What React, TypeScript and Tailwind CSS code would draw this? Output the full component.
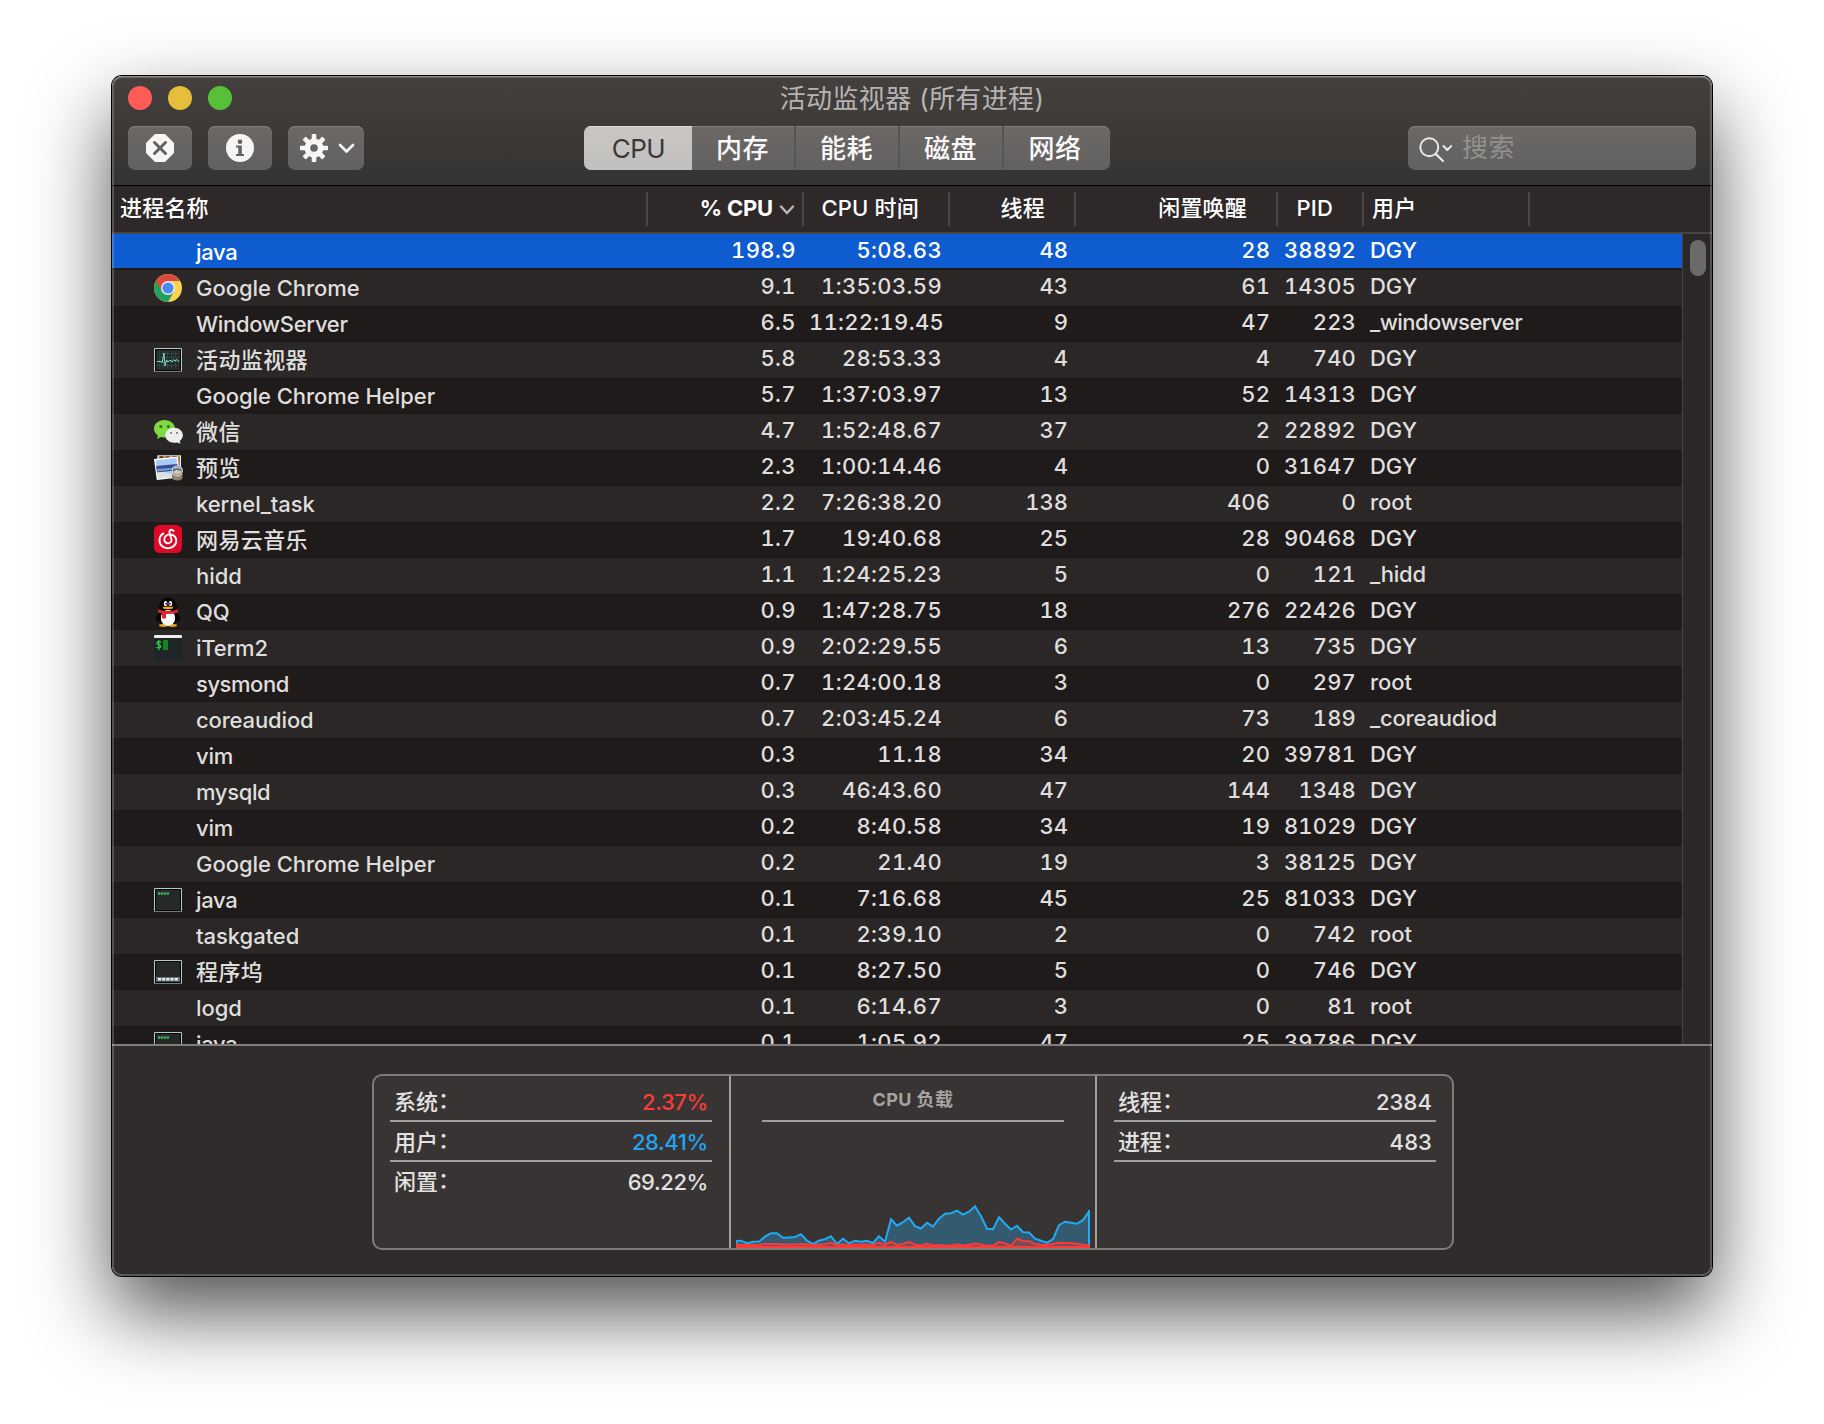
import React from "react";

type IconName = "chrome" | "activity" | "wechat" | "preview" | "netease" | "qq" | "iterm" | "exec" | "dock";

interface Process {
  name: string;
  cpu: string;
  time: string;
  threads: string;
  idle: string;
  pid: string;
  user: string;
  icon?: IconName;
}

const p = (
  name: string,
  cpu: string,
  time: string,
  threads: string,
  idle: string,
  pid: string,
  user: string,
  icon?: IconName,
): Process => ({ name, cpu, time, threads, idle, pid, user, icon });

const processes: Process[] = [
  p("java", "198.9", "5:08.63", "48", "28", "38892", "DGY"),
  p("Google Chrome", "9.1", "1:35:03.59", "43", "61", "14305", "DGY", "chrome"),
  p("WindowServer", "6.5", "11:22:19.45", "9", "47", "223", "_windowserver"),
  p("活动监视器", "5.8", "28:53.33", "4", "4", "740", "DGY", "activity"),
  p("Google Chrome Helper", "5.7", "1:37:03.97", "13", "52", "14313", "DGY"),
  p("微信", "4.7", "1:52:48.67", "37", "2", "22892", "DGY", "wechat"),
  p("预览", "2.3", "1:00:14.46", "4", "0", "31647", "DGY", "preview"),
  p("kernel_task", "2.2", "7:26:38.20", "138", "406", "0", "root"),
  p("网易云音乐", "1.7", "19:40.68", "25", "28", "90468", "DGY", "netease"),
  p("hidd", "1.1", "1:24:25.23", "5", "0", "121", "_hidd"),
  p("QQ", "0.9", "1:47:28.75", "18", "276", "22426", "DGY", "qq"),
  p("iTerm2", "0.9", "2:02:29.55", "6", "13", "735", "DGY", "iterm"),
  p("sysmond", "0.7", "1:24:00.18", "3", "0", "297", "root"),
  p("coreaudiod", "0.7", "2:03:45.24", "6", "73", "189", "_coreaudiod"),
  p("vim", "0.3", "11.18", "34", "20", "39781", "DGY"),
  p("mysqld", "0.3", "46:43.60", "47", "144", "1348", "DGY"),
  p("vim", "0.2", "8:40.58", "34", "19", "81029", "DGY"),
  p("Google Chrome Helper", "0.2", "21.40", "19", "3", "38125", "DGY"),
  p("java", "0.1", "7:16.68", "45", "25", "81033", "DGY", "exec"),
  p("taskgated", "0.1", "2:39.10", "2", "0", "742", "root"),
  p("程序坞", "0.1", "8:27.50", "5", "0", "746", "DGY", "dock"),
  p("logd", "0.1", "6:14.67", "3", "0", "81", "root"),
  p("java", "0.1", "1:05.92", "47", "25", "39786", "DGY", "exec"),
];

const TIGHT: Record<string, string> = {
  WindowServer: "tracking-[-0.3px]",
  sysmond: "tracking-[-0.45px]",
  mysqld: "tracking-[-0.35px]",
  java: "tracking-[-0.3px]",
  vim: "tracking-[-0.2px]",
  coreaudiod: "tracking-[-0.15px]",
  kernel_task: "tracking-[-0.1px]",
  iTerm2: "tracking-[-0.2px]",
  _windowserver: "tracking-[-0.55px]",
  _coreaudiod: "tracking-[-0.2px]",
  _hidd: "tracking-[-0.2px]",
};

function tracking(text: string) {
  if (/[\u4e00-\u9fff]/.test(text)) return "tracking-[0.4px]";
  return TIGHT[text] ?? "tracking-[-0.04px]";
}

const COLUMNS = "grid grid-cols-[536px_156px_146px_126px_202px_86px_166px_1fr]";

function Monitor({ children }: { children?: React.ReactNode }) {
  return (
    <>
      <rect x="0" y="6" width="28" height="24" rx="1" fill="#b9c6c9" />
      <rect x="0" y="29" width="28" height="1" fill="#777" />
      <rect x="1" y="7" width="26" height="22" fill="#080909" />
      <rect x="2" y="8" width="24" height="20" fill="#262928" />
      {children}
    </>
  );
}

function ProcessIcon({ name }: { name?: IconName }) {
  return (
    <svg width="30" height="36" viewBox="0 0 30 36" className="shrink-0">
      {name === "chrome" && (
        <g>
          <circle cx="14" cy="18" r="14" fill="#fdd04f" />
          <path d="M14 18 L1.9 11 A14 14 0 0 0 14 32 L20.1 21.5 Z" fill="#21a060" />
          <path d="M14 18 L7.9 21.5 L1.9 11 A14 14 0 0 1 26.1 11 H14 Z" fill="#dc4a3e" />
          <circle cx="14" cy="18" r="7" fill="#f4f1f0" />
          <circle cx="14" cy="18" r="5.6" fill="#4a8af4" />
        </g>
      )}
      {name === "activity" && (
        <Monitor>
          <path
            d="M3 11.5H25M3 15.5H25M3 19.5H25M3 23.5H25M5.5 9V27M9.5 9V27M13.5 9V27M17.5 9V27M21.5 9V27"
            stroke="#2e5850"
            strokeWidth="1"
            opacity="0.6"
          />
          <path
            d="M3 19.5H7L8 21L10 11L11 24L12.5 18L14 20L16 18L18 20L19.5 17.5L21 19L23 17.5L25 20"
            fill="none"
            stroke="#84d9c6"
            strokeWidth="1"
          />
        </Monitor>
      )}
      {name === "wechat" && (
        <g>
          <path
            d="M10.5 6C4.6 6 0 9.9 0 14.7c0 2.8 1.5 5.1 3.9 6.7L3.1 25l3.8-2.1c1.2.3 2.3.5 3.6.5 5.9 0 10.500-3.9 10.500-8.700S16.4 6 10.500 6Z"
            fill="#7fd943"
          />
          <circle cx="6.8" cy="12.4" r="1.5" fill="#2c6b1c" />
          <circle cx="14.4" cy="12.4" r="1.5" fill="#2c6b1c" />
          <path
            d="M20.2 13.8c-4.9 0-8.900 3.3-8.900 7.500s4 7.500 8.900 7.500c1 0 2-.1 2.900-.4l3.400 1.400-.8-2.900c2-1.400 3.200-3.400 3.200-5.600 0-4.200-3.900-7.500-8.700-7.500Z"
            fill="#eceeee"
          />
          <circle cx="17" cy="19" r="1.1" fill="#777" />
          <circle cx="23" cy="19" r="1.1" fill="#777" />
        </g>
      )}
      {name === "preview" && (
        <g>
          <path d="M3.3 5.3H27V26H3.3Z" fill="#f1efe9" />
          <path d="M4.5 6.3H26V24H4.5Z" fill="#a8733d" />
          <path d="M6 6.3h3v2H6zM12 6.3h3v2h-3zM19 6.3h4v2h-4z" fill="#5d3b1c" />
          <path d="M0 9L23.8 6.6L26 27.6L2.8 30Z" fill="#fff" />
          <path d="M1.5 10.2L22.6 8.1L24.5 26.4L4 28.5Z" fill="#a8cbf8" />
          <path d="M2.2 16L23.3 14L24 20L3 22.8Z" fill="#36508f" />
          <path d="M2.6 19L23.8 17.5L24 19L3 21.5Z" fill="#6f9fd8" />
          <path d="M3.1 22.6L10 21.8L16 24L24.2 23.5L24.5 26.4L4 28.5Z" fill="#dfe3df" />
          <path d="M18 24H28.500V27.5Q28 30.5 23.300 30.5T18 27.5Z" fill="#8f8469" />
          <circle cx="23.3" cy="20.8" r="5.6" fill="#d8dbdc" />
          <circle cx="23.3" cy="20.8" r="4.5" fill="#51617a" />
          <path d="M19.3 21.500l3.500-2 2 1.300 2.600-.6a4.200 4.200 0 0 1-8 2Z" fill="#d9c7ad" />
          <path d="M20.3 18.6Q23.3 16 26.3 18.8" stroke="#c6ddf2" strokeWidth="1.2" fill="none" />
        </g>
      )}
      {name === "netease" && (
        <g>
          <rect x="0" y="3" width="28" height="28" rx="5.5" fill="#dc0a26" />
          <path
            d="M9.4 11.400C4.6 14.200 4.400 20.800 7.900 24C11.800 27.500 18.800 26.700 21.400 22C23.700 17.400 21 12.400 16.200 12.400C12.400 12.400 10 14.700 10.300 17.700C10.500 20 12.300 21.300 14 21.300C16.500 21.300 17.900 19.300 17.400 17.100L15.500 10.400C15.100 8.500 16.200 7.700 17.400 7.700C18.400 7.700 19 8.200 19.600 9"
            fill="none"
            stroke="#fff"
            strokeWidth="1.9"
            strokeLinecap="round"
          />
        </g>
      )}
      {name === "qq" && (
        <g>
          <path d="M5 18Q1 24 2 27.5Q3.5 28 5.5 24ZM23 18Q27 24 26 27.5Q24.5 28 22.5 24Z" fill="#060606" />
          <ellipse cx="14" cy="22.5" rx="10" ry="10" fill="#060606" />
          <path d="M5 15C5 8 8.5 3.5 14 3.5S23 8 23 15V19H5Z" fill="#060606" />
          <ellipse cx="14" cy="24" rx="7" ry="8" fill="#fff" />
          <ellipse cx="9.5" cy="31.5" rx="4.5" ry="1.4" fill="#e9a01c" />
          <ellipse cx="18.5" cy="31.5" rx="4.5" ry="1.4" fill="#e9a01c" />
          <ellipse cx="14" cy="24.500" rx="6.800" ry="7.300" fill="#fff" />
          <ellipse cx="11.6" cy="9.5" rx="1.8" ry="2.5" fill="#fff" />
          <ellipse cx="16.4" cy="9.5" rx="1.8" ry="2.5" fill="#fff" />
          <circle cx="12.2" cy="9.7" r="0.9" fill="#111" />
          <circle cx="15.9" cy="9.7" r="0.9" fill="#111" />
          <ellipse cx="14" cy="13.8" rx="5.3" ry="1.4" fill="#f0a51e" />
          <path d="M4 15.5Q14 18.5 24 15.5L24 18.5Q14 21.5 4 18.5Z" fill="#e4232c" />
          <path d="M8 18.5h4v6H8z" fill="#e4232c" />
        </g>
      )}
      {name === "iterm" && (
        <g>
          <rect x="0" y="5" width="28" height="25" rx="1" fill="#1e2628" />
          <rect x="0" y="5" width="28" height="3" rx="1" fill="#f0f0f0" />
          <path
            d="M7 12.5C6.5 11.5 3 11.2 2.8 13S7 14.6 6.8 16.5S3 18 2.3 17M4.8 10V20"
            fill="none"
            stroke="#2fd44a"
            strokeWidth="1.2"
          />
          <rect x="9" y="10" width="5" height="10" fill="#148425" />
        </g>
      )}
      {name === "exec" && (
        <Monitor>
          <path d="M4 11.5H15" stroke="#3fae58" strokeWidth="2.4" strokeDasharray="2.3 0.6" />
        </Monitor>
      )}
      {name === "dock" && (
        <Monitor>
          <rect x="2" y="23" width="24" height="4.5" fill="#6c7378" />
          <path d="M4 25.2H25" stroke="#e4f0f8" strokeWidth="2.6" strokeDasharray="3 1.2" />
        </Monitor>
      )}
    </svg>
  );
}

function Separator() {
  return <span className="absolute right-0 top-[6px] h-[34px] w-[2px] bg-[#4a4645]" />;
}

function HeaderCell({ children, align = "right" }: { children?: React.ReactNode; align?: "left" | "right" }) {
  return (
    <div
      className={
        align === "left"
          ? "relative flex items-center pb-[2px] pl-[8px]"
          : "relative flex items-center justify-end pb-[2px] pr-[31px]"
      }
    >
      {children}
      <Separator />
    </div>
  );
}

function TableHeader() {
  return (
    <div className="h-[48px] shrink-0 border-b-2 border-[#484543] bg-[#2e2828] text-[22px] font-medium tracking-[0.2px] text-white">
      <div className={`${COLUMNS} h-full w-[1570px]`}>
        <HeaderCell align="left">进程名称</HeaderCell>
        <HeaderCell>
          <span className="whitespace-nowrap font-bold tracking-[-0.2px]">% CPU</span>
          <svg className="absolute right-[9px] top-[18px]" width="16" height="12" viewBox="0 0 16 12">
            <path d="M2 2.5L8 9L14 2.5" fill="none" stroke="#bbb8b7" strokeWidth="2.4" strokeLinecap="round" />
          </svg>
        </HeaderCell>
        <HeaderCell>
          <span className="whitespace-nowrap">CPU 时间</span>
        </HeaderCell>
        <HeaderCell>线程</HeaderCell>
        <HeaderCell>闲置唤醒</HeaderCell>
        <HeaderCell>PID</HeaderCell>
        <HeaderCell align="left">用户</HeaderCell>
      </div>
    </div>
  );
}

function Row({ process, index }: { process: Process; index: number }) {
  const selected = index === 0;
  const tone = selected
    ? "bg-[#0f5bd0] text-white border-b-2 border-[#1f1b1a]"
    : index % 2
      ? "bg-[#2a2726] text-[#dfdedd]"
      : "bg-[#1f1b1a] text-[#dfdedd]";
  const num = "whitespace-nowrap pr-[8px] text-right tabular-nums leading-[32px]";
  return (
    <div className={`${COLUMNS} h-[36px] shrink-0 text-[22px] font-medium ${tone}`}>
      <div className="flex h-[36px] items-start pl-[42px]">
        <ProcessIcon name={process.icon} />
        <span className={`whitespace-nowrap pl-[12px] leading-[36px] ${tracking(process.name)}`}>{process.name}</span>
      </div>
      <div className={`${num} tracking-[0.4px]`}>{process.cpu}</div>
      <div className={`${num} ${process.time.length > 10 ? "-mr-[2px] tracking-[0.3px]" : "tracking-[0.34px]"}`}>
        {process.time}
      </div>
      <div className={num}>{process.threads}</div>
      <div className={`${num} tracking-[0.1px]`}>{process.idle}</div>
      <div className={`${num} tracking-[0.15px]`}>{process.pid}</div>
      <div className={`whitespace-nowrap pl-[6px] leading-[32px] ${tracking(process.user)}`}>{process.user}</div>
    </div>
  );
}

function ToolButton({ children, wide }: { children: React.ReactNode; wide?: boolean }) {
  return (
    <div
      className={`flex h-[44px] items-center justify-center rounded-[7px] bg-gradient-to-b from-[#6b6866] to-[#636160] shadow-[inset_0_1px_0_#858180] ${
        wide ? "w-[76px] pl-[4px]" : "w-[64px]"
      }`}
    >
      {children}
    </div>
  );
}

function Titlebar() {
  const tabs = ["内存", "能耗", "磁盘", "网络"];
  return (
    <div className="flex h-[110px] shrink-0 flex-col border-b border-black bg-gradient-to-b from-[#44403e] to-[#353331]">
      <div className="grid h-[44px] grid-cols-[1fr_auto_1fr] items-center px-[16px]">
        <div className="flex gap-[16px]">
          <span className="size-[24px] rounded-full bg-[#ff5b57]" />
          <span className="size-[24px] rounded-full bg-[#e5bf3c]" />
          <span className="size-[24px] rounded-full bg-[#57c038]" />
        </div>
        <div className="h-[44px] whitespace-nowrap text-[26px] leading-[46px] tracking-[0.35px] text-[#b6b4b2]">
          活动监视器 (所有进程)
        </div>
        <div />
      </div>
      <div className="mt-[6px] flex h-[44px] px-[16px]">
        <div className="flex w-[456px] gap-[16px]">
          <ToolButton>
            <svg width="28" height="28" viewBox="0 0 28 28">
              <path d="M9 0H19L28 9V19L19 28H9L0 19V9Z" fill="#f8f6f5" />
              <path d="M8.5 8.5L19.5 19.5M19.5 8.5L8.5 19.5" stroke="#646160" strokeWidth="3" strokeLinecap="round" />
            </svg>
          </ToolButton>
          <ToolButton>
            <svg width="28" height="28" viewBox="0 0 28 28">
              <circle cx="14" cy="14" r="14" fill="#f8f6f5" />
              <circle cx="14" cy="7.8" r="2.3" fill="#646160" />
              <path d="M10 11.5H15.8V20H18V22H10V20H12.3V13.5H10Z" fill="#646160" />
            </svg>
          </ToolButton>
          <ToolButton wide>
            <svg width="56" height="28" viewBox="0 0 56 28">
              <g fill="#f8f6f5">
                {[0, 45, 90, 135].map((angle) => (
                  <rect key={angle} x="11.7" y="0" width="4.6" height="28" rx="0.8" transform={`rotate(${angle} 14 14)`} />
                ))}
                <circle cx="14" cy="14" r="9.5" />
              </g>
              <circle cx="14" cy="14" r="3.8" fill="#676462" />
              <path d="M40 11L46.500 17.500L53 11" fill="none" stroke="#f8f6f5" strokeWidth="2.6" strokeLinecap="round" strokeLinejoin="round" />
            </svg>
          </ToolButton>
        </div>
        <div className="flex w-[526px] overflow-hidden rounded-[7px] bg-gradient-to-b from-[#6b6866] to-[#636160] text-[26px] leading-[46px] text-[#faf9f9] shadow-[inset_0_1px_0_#858180]">
          <div className="w-[108px] bg-gradient-to-b from-[#c9c6c4] to-[#c2c0be] pl-[1px] text-center tracking-[-0.5px] text-[#3b3938] shadow-[inset_0_1px_0_#dcdad8]">
            CPU
          </div>
          {tabs.map((tab, i) => (
            <div
              key={tab}
              className={
                i < 3
                  ? "w-[104px] border-r-2 border-[#575553] pr-[1px] text-center font-medium tracking-[0.6px]"
                  : "w-[106px] pr-[4px] text-center font-medium tracking-[0.6px]"
              }
            >
              {tab}
            </div>
          ))}
        </div>
        <div className="ml-auto flex w-[288px] items-center rounded-[7px] bg-gradient-to-b from-[#6b6866] to-[#636160] pl-[10px] shadow-[inset_0_1px_0_#858180]">
          <svg width="36" height="28" viewBox="0 0 36 28" fill="none" stroke="#eceaea" strokeLinecap="round">
            <circle cx="11.3" cy="13.3" r="9" strokeWidth="1.9" />
            <path d="M18 20.2L25 27" strokeWidth="2.2" />
            <path d="M25.500 12L29.300 16L33.200 12" strokeWidth="1.9" strokeLinejoin="round" />
          </svg>
          <span className="pl-[8px] text-[26px] leading-[46px] tracking-[0.4px] text-[#92908e]">搜索</span>
        </div>
      </div>
    </div>
  );
}

function Stat({ label, value, color, line = true }: { label: string; value: string; color: string; line?: boolean }) {
  return (
    <div className={`flex h-[40px] items-start justify-between px-[4px] ${line ? "border-b-2 border-[#a19f9d]" : ""}`}>
      <span className="leading-[40px] text-[#e3e2e1]">
        {label}
        <span className="relative -top-[2px]">：</span>
      </span>
      <span className={`leading-[40px] ${value.endsWith("%") ? "tracking-[-0.4px]" : "tracking-[0.1px]"} ${color}`}>{value}</span>
    </div>
  );
}

/* One sample every 6px; heights are measured down from the plot's top edge. */
const userLoad = [
  46, 45.5, 48, 46.5, 46.3, 41.5, 38, 38, 42.6, 42.2, 41.8, 39, 45.5, 48.8, 45.5, 44, 41, 48.8, 43.5, 48, 45.5, 46.5,
  45.5, 47.8, 41, 46.7, 24, 30.5, 27, 22.5, 31, 33.3, 27.5, 31.5, 23.5, 18.5, 18, 15.5, 19.5, 16.5, 11, 21, 33.5,
  34, 22, 28.5, 34.3, 30.5, 37, 37.2, 43.5, 45.5, 47.5, 44, 30, 26.5, 27.5, 28.5, 25, 16.5,
];
const systemLoad = [
  50, 49.5, 49.7, 49.8, 49.5, 48.7, 48.7, 48.7, 49.2, 49.2, 49.2, 48.7, 49.3, 49.8, 49.3, 49, 47.5, 49.8,
  49.2, 49.7, 49.2, 49.5, 49.3, 50, 47.5, 49.8, 46.5, 49.7, 48.8, 46.7, 49.5, 50.3, 48.7, 50, 50, 50.3,
  50.5, 49, 50.5, 49.5, 48.3, 49.2, 50.5, 50.6, 46.7, 48.2, 50.7, 43.5, 45.8, 46, 48.7, 49.5, 49.8, 48.5, 47.5,
  47.8, 48, 48.5, 49.5, 49.7,
];
const toPoints = (values: number[]) => values.map((v, i) => `${i * 6 - 1},${v + 1.2}`).join(" ");

function LoadGraph() {
  const user = toPoints(userLoad);
  const system = toPoints(systemLoad);
  return (
    <svg width="354" height="54" viewBox="0 0 354 54" className="ml-[5px] block">
      <polygon points={`0,54 ${user} 354,54`} fill="#345a70" />
      <polyline points={user} fill="none" stroke="#22aaf5" strokeWidth="2" />
      <path d="M0.500 46V54M353 16V54" stroke="#22aaf5" strokeWidth="2" />
      <polygon points={`0,54 ${system} 354,54`} fill="#7b4b58" />
      <polyline points={system} fill="none" stroke="#fb3b38" strokeWidth="2" />
      <rect x="0" y="52" width="354" height="2" fill="#fb3b38" />
    </svg>
  );
}

function Footer() {
  return (
    <div className="flex h-[232px] shrink-0 justify-center border-t-2 border-[#807e7c] bg-[#302c2b] pt-[28px]">
      <div className="mr-[-2px] flex h-[176px] w-[1082px] overflow-hidden rounded-[10px] border-2 border-[#7e7c7a] bg-[#383433] text-[22px] font-medium">
        <div className="w-[355px] pl-[16px] pr-[17px] pt-[6px]">
          <Stat label="系统" value="2.37%" color="text-[#fb3b38]" />
          <Stat label="用户" value="28.41%" color="text-[#22a4f2]" />
          <Stat label="闲置" value="69.22%" color="text-[#e3e2e1]" line={false} />
        </div>
        <div className="flex w-[368px] flex-col justify-between border-x-2 border-[#a19f9d]">
          <div className="mx-[31px] h-[46px] border-b-2 border-[#a19f9d] text-center text-[18px] font-bold leading-[47px] tracking-[0.4px] text-[#a5a3a1]">
            CPU 负载
          </div>
          <LoadGraph />
        </div>
        <div className="flex-1 pl-[17px] pr-[16px] pt-[6px]">
          <Stat label="线程" value="2384" color="text-[#e3e2e1]" />
          <Stat label="进程" value="483" color="text-[#e3e2e1]" />
        </div>
      </div>
    </div>
  );
}

export default function App() {
  return (
    <div className="h-[1424px] w-[1824px] overflow-hidden bg-white pl-[112px] pt-[76px] font-['Inter','Noto_Sans_CJK_SC',sans-serif]">
      <div className="relative flex h-[1200px] w-[1600px] flex-col rounded-[10px] shadow-[0_0_0_1px_#000,0_36px_80px_rgba(0,0,0,0.69)]">
        <div className="flex h-full w-full flex-col overflow-hidden rounded-[10px]">
          <Titlebar />
          <TableHeader />
          <div className="flex h-[810px] shrink-0">
            <div className="flex w-[1570px] flex-col overflow-hidden">
              {processes.map((process, i) => (
                <Row key={i} process={process} index={i} />
              ))}
            </div>
            <div className="flex w-[30px] justify-center border-l border-[#454241] bg-[#2b2827] pt-[6px]">
              <div className="h-[36px] w-[16px] rounded-full bg-[#6c6b69]" />
            </div>
          </div>
          <Footer />
        </div>
        <div className="pointer-events-none absolute inset-0 rounded-[10px] shadow-[inset_0_1px_0_rgba(255,255,255,0.25),inset_0_0_0_2px_rgba(255,255,255,0.2)]" />
      </div>
    </div>
  );
}
